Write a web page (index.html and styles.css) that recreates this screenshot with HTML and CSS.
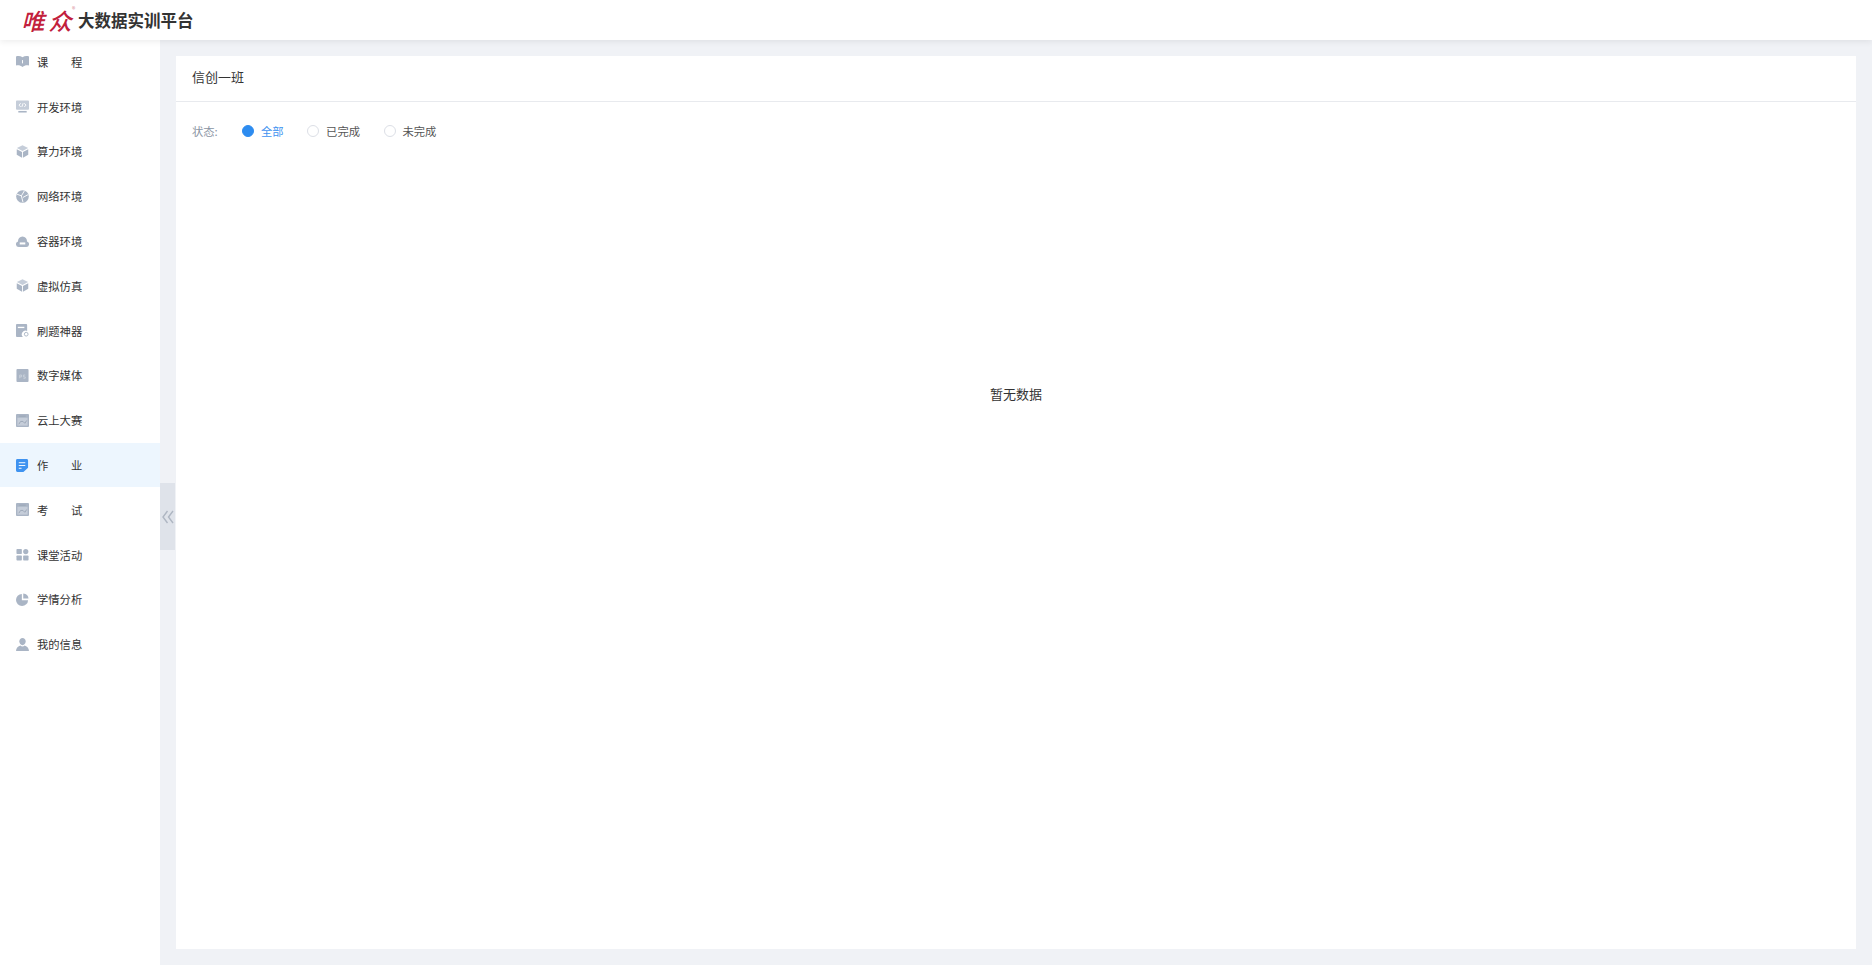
FILE: index.html
```html
<!DOCTYPE html>
<html lang="zh-CN">
<head>
  <meta charset="UTF-8">
  <title>大数据实训平台</title>
  <link rel="stylesheet" href="styles.css">
</head>
<body>
  <header class="topbar">
    <div class="logo">
      <span class="logo-mark">唯</span><span class="logo-mark second">众</span><span class="logo-reg">®</span>
    </div>
    <div class="logo-title">大数据实训平台</div>
  </header>

  <div class="layout">
    <aside class="sidebar">
      <ul class="menu">
        <li class="menu-item">
          <svg class="menu-icon" viewBox="0 0 14 14"><path d="M0 1.500c2.500-.8 5-.5 7 .8 2-1.300 4.500-1.600 7-.8v9.800c-2.500-.5-5-.2-7 1.700-2-1.900-4.500-2.200-7-1.700z"/><rect class="cut" x="6.500" y="5.500" width="1" height="3.500"/></svg>
          <span>课&emsp;&emsp;程</span>
        </li>
        <li class="menu-item">
          <svg class="menu-icon" viewBox="0 0 14 14"><path class="soft" d="M1 .5h12a1 1 0 0 1 1 1v8a1 1 0 0 1-1 1H1a1 1 0 0 1-1-1v-8a1 1 0 0 1 1-1z"/><rect x="2.500" y="11.800" width="9" height="1.700"/><path class="cut-line" d="M5 3.500L3.300 5.500 5 7.500M9 3.500l1.700 2L9 7.500M7.700 3.500l-1.400 4"/></svg>
          <span>开发环境</span>
        </li>
        <li class="menu-item">
          <svg class="menu-icon" viewBox="0 0 14 14"><path class="soft" d="M7 .2l6 3.100L7 6.400 1 3.300z"/><path d="M.8 4.500l5.700 3v6.300L.8 10.600z"/><path d="M13.200 4.500l-5.700 3v6.300l5.700-3.200z"/></svg>
          <span>算力环境</span>
        </li>
        <li class="menu-item">
          <svg class="menu-icon" viewBox="0 0 14 14"><circle cx="7" cy="7" r="6.800"/><path class="cut-line" d="M1 4.500l4.800 1.800 1.700 6.700M5.800 6.300L9 1M7.500 8l5.500-3"/></svg>
          <span>网络环境</span>
        </li>
        <li class="menu-item">
          <svg class="menu-icon" viewBox="0 0 14 14"><path d="M3 13a3 3 0 0 1-.8-5.900A5 5 0 0 1 7 1.500a5 5 0 0 1 4.800 5.600A3 3 0 0 1 11 13z"/><rect class="cut" x="4" y="8" width="6" height="2.200"/></svg>
          <span>容器环境</span>
        </li>
        <li class="menu-item">
          <svg class="menu-icon" viewBox="0 0 14 14"><path class="soft" d="M7 .2l6 3.100L7 6.400 1 3.300z"/><path d="M.8 4.500l5.700 3v6.300L.8 10.600z"/><path d="M13.200 4.500l-5.700 3v6.300l5.700-3.200z"/></svg>
          <span>虚拟仿真</span>
        </li>
        <li class="menu-item">
          <svg class="menu-icon" viewBox="0 0 14 14"><path d="M1 0h10a1 1 0 0 1 1 1v6.500A4 4 0 0 0 7.500 14H1a1 1 0 0 1-1-1V1a1 1 0 0 1 1-1z"/><rect class="cut" x="2" y="3" width="7" height="1.400"/><circle class="ring" cx="11" cy="11" r="2"/></svg>
          <span>刷题神器</span>
        </li>
        <li class="menu-item">
          <svg class="menu-icon" viewBox="0 0 14 14"><rect x="0.500" width="13" height="14" rx="1"/><path class="pale-line" d="M4 10V6.500h2V8.500H4M10 6.500H8V8.500h2v1.500H8"/></svg>
          <span>数字媒体</span>
        </li>
        <li class="menu-item">
          <svg class="menu-icon" viewBox="0 0 14 14"><rect width="14" height="14" rx="1"/><rect class="soft" x="1.500" y="4" width="11" height="8.500"/><path class="grey-line" d="M3 11l2-3h2.500l2 2 2-3M3.500 2.300h7"/></svg>
          <span>云上大赛</span>
        </li>
        <li class="menu-item active">
          <svg class="menu-icon" viewBox="0 0 14 14"><path d="M1.500 0h10A1.500 1.500 0 0 1 13 1.500v7.800L8 14H1.500A1.500 1.500 0 0 1 0 12.500v-11A1.500 1.500 0 0 1 1.500 0z"/><path class="cut-line" d="M3 4h7M3 7h7M3 10h3"/></svg>
          <span>作&emsp;&emsp;业</span>
        </li>
        <li class="menu-item">
          <svg class="menu-icon" viewBox="0 0 14 14"><rect width="14" height="14" rx="1"/><rect class="soft" x="1.500" y="4" width="11" height="8.500"/><path class="grey-line" d="M3 11l2-3h2.500l2 2 2-3M3.500 2.300h7"/></svg>
          <span>考&emsp;&emsp;试</span>
        </li>
        <li class="menu-item">
          <svg class="menu-icon" viewBox="0 0 14 14"><rect x="0.500" y="1" width="5.800" height="5.500" rx=".8"/><circle cx="10.500" cy="3.800" r="2.800"/><rect x="0.500" y="8" width="5.800" height="5.500" rx=".8"/><rect x="7.700" y="8" width="5.800" height="5.500" rx=".8"/></svg>
          <span>课堂活动</span>
        </li>
        <li class="menu-item">
          <svg class="menu-icon" viewBox="0 0 14 14"><path d="M6.300 1v6.700H13A6.500 6.500 0 1 1 6.300 1z"/><path d="M7.800.5A6 6 0 0 1 13.500 6H7.800z"/></svg>
          <span>学情分析</span>
        </li>
        <li class="menu-item">
          <svg class="menu-icon" viewBox="0 0 14 14"><path d="M7 0c2 0 3.400 1.500 3.400 3.600 0 2-1.400 4.200-3.400 4.200S3.600 5.600 3.600 3.600C3.600 1.500 5 0 7 0z"/><path d="M0 14c0-3.200 2.500-5 4.700-5.800.7.600 1.500.9 2.300.9s1.600-.3 2.300-.9C11.500 9 14 10.800 14 14z"/></svg>
          <span>我的信息</span>
        </li>
      </ul>
    </aside>

    <div class="collapse-col">
      <div class="collapse-btn">
        <svg viewBox="0 0 12 14"><path d="M5.500 1L1 7l4.500 6M11 1L6.500 7l4.500 6"/></svg>
      </div>
    </div>

    <main class="content">
      <section class="card">
        <div class="card-head">信创一班</div>
        <div class="filter">
          <span class="filter-label">状态:</span>
          <label class="radio checked"><i></i>全部</label>
          <label class="radio"><i></i>已完成</label>
          <label class="radio"><i></i>未完成</label>
        </div>
        <div class="empty">暂无数据</div>
      </section>
    </main>
  </div>
</body>
</html>
```

FILE: styles.css
```css
* {
  box-sizing: border-box;
}
html, body {
  height: 100%;
}
body {
  margin: 0;
  display: flex;
  flex-direction: column;
  font-family: "Noto Sans CJK SC", "Liberation Sans", sans-serif;
  background-color: #f0f2f6;
  color: #333;
  overflow: hidden;
}
.topbar {
  position: relative;
  z-index: 2;
  flex: none;
  display: flex;
  align-items: center;
  height: 40px;
  padding-left: 24px;
  background: #fff;
  box-shadow: 0 2px 6px rgba(0,0,0,0.07);
}
.logo {
  position: relative;
  display: flex;
  width: 54px;
  color: #c2203c;
}
.logo-mark {
  display: block;
  font-size: 23px;
  line-height: 28px;
  font-weight: 500;
  transform: skewX(-14deg);
}
.logo-mark.second {
  margin-left: 4px;
}
.logo-reg {
  position: absolute;
  top: -1px;
  left: 48px;
  font-size: 7px;
  line-height: 8px;
  color: #d98a96;
}
.logo-title {
  font-size: 16.500px;
  font-weight: 700;
  color: #333;
  white-space: nowrap;
}
.layout {
  flex: 1;
  display: flex;
  min-height: 0;
}
.sidebar {
  flex: none;
  width: 160px;
  background: #fff;
}
.menu {
  list-style: none;
  margin: -0.500px 0 0;
  padding: 0;
}
.menu-item {
  display: flex;
  align-items: center;
  height: 44.800px;
  padding-left: 16px;
  font-size: 11.300px;
  color: #333;
}
.menu-item span {
  margin-left: 8px;
  white-space: nowrap;
}
.menu-item.active {
  background: #edf6fe;
}
.menu-icon {
  flex: none;
  width: 13px;
  height: 13px;
  fill: #aab5c5;
}
.menu-item.active .menu-icon {
  fill: #3f93f0;
}
.menu-icon .soft {
  fill: #c5cdd9;
}
.menu-icon .cut {
  fill: #fff;
}
.menu-icon .cut-line {
  fill: none;
  stroke: #fff;
  stroke-width: 1;
}
.menu-icon .pale-line {
  fill: none;
  stroke: #c9d0da;
  stroke-width: 1;
}
.menu-icon .grey-line {
  fill: none;
  stroke: #9aa5b5;
  stroke-width: 1;
}
.menu-icon .ring {
  fill: none;
  stroke: #aab5c5;
  stroke-width: 1;
}
.collapse-col {
  flex: none;
  width: 16px;
  display: flex;
  align-items: center;
  padding-top: 28px;
}
.collapse-btn {
  display: flex;
  align-items: center;
  justify-content: center;
  width: 15px;
  height: 67px;
  background: #dfe3ea;
}
.collapse-btn svg {
  width: 12px;
  height: 14px;
  fill: none;
  stroke: #aeb6c2;
  stroke-width: 1.400;
}
.content {
  flex: 1;
  min-width: 0;
  padding: 16px 16px 16px 0;
}
.card {
  display: flex;
  flex-direction: column;
  height: 100%;
  background: #fff;
}
.card-head {
  flex: none;
  height: 46px;
  padding-left: 16px;
  font-size: 13px;
  line-height: 42px;
  color: #333;
  border-bottom: 1px solid #e8eaee;
}
.filter {
  flex: none;
  display: flex;
  align-items: center;
  height: 20px;
  margin-top: 19px;
  padding-left: 16px;
  font-size: 11.300px;
}
.filter-label {
  width: 50px;
  color: #8a94a3;
}
.radio {
  display: flex;
  align-items: center;
  margin-right: 23.500px;
  color: #555;
}
.radio i {
  width: 12px;
  height: 12px;
  margin-right: 7px;
  border: 1px solid #dcdfe6;
  border-radius: 50%;
}
.radio.checked {
  color: #3f93f0;
}
.radio.checked i {
  background: #2d8cf0;
  border-color: #2d8cf0;
}
.empty {
  flex: none;
  margin-top: 243px;
  text-align: center;
  font-size: 13px;
  line-height: 20px;
  color: #333;
}
```
